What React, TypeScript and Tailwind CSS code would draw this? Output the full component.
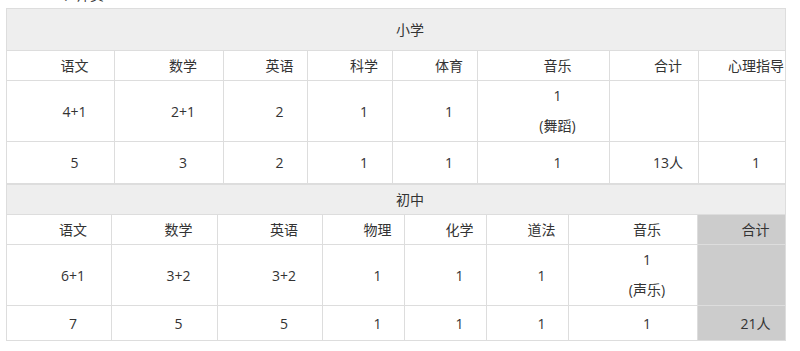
import React from "react";

const font = { fontFamily: '"Open Sans", "Noto Sans CJK SC", sans-serif' };

type Cell = { t?: React.ReactNode; gray?: boolean };

function Row({ cells, h }: { cells: Cell[]; h: string }) {
  return (
    <tr className={h}>
      {cells.map((c, i) => (
        <td
          key={i}
          className={
            "border border-[#dddddd] text-center align-middle pl-[28px] pr-0 py-0 whitespace-nowrap " +
            (c.gray ? "bg-[#cccccc] border-t-[#cccccc] " : "")
          }
        >
          {c.t}
        </td>
      ))}
    </tr>
  );
}

function Two({ a, b }: { a: string; b: string }) {
  return (
    <div className="leading-[30px]">
      <div>{a}</div>
      <div>{b}</div>
    </div>
  );
}

export default function App() {
  const w1 = [108, 109, 84, 85, 85, 132, 89, 87];
  const w2 = [105, 106, 105, 82, 82, 82, 129, 88];
  return (
    <div className="w-[800px] h-[351px] bg-white text-[#333333] text-[14px]" style={font}>
      <div className="h-[8px] overflow-hidden pl-[48px]">
        <div className="-mt-[15px] leading-[20px] text-[#333333]">
          <span className="text-[#c0392b]">一</span>、师资
        </div>
      </div>
      <div className="pl-[6px]">
        <table className="table-fixed border-collapse w-[779px] border border-[#dddddd]">
          <colgroup>
            {w1.map((w, i) => (
              <col key={i} style={{ width: w }} />
            ))}
          </colgroup>
          <tbody>
            <tr className="h-[42px]">
              <td colSpan={8} className="border border-[#dddddd] bg-[#eeeeee] text-center pl-[28px]">
                小学
              </td>
            </tr>
            <Row
              h="h-[30px]"
              cells={["语文", "数学", "英语", "科学", "体育", "音乐", "合计", "心理指导"].map((t) => ({ t }))}
            />
            <Row
              h="h-[60px]"
              cells={[
                { t: "4+1" },
                { t: "2+1" },
                { t: "2" },
                { t: "1" },
                { t: "1" },
                { t: <Two a="1" b="(舞蹈)" /> },
                { t: "" },
                { t: "" },
              ]}
            />
            <Row h="h-[42px]" cells={["5", "3", "2", "1", "1", "1", "13人", "1"].map((t) => ({ t }))} />
          </tbody>
        </table>
        <table className="table-fixed border-collapse w-[779px] border border-[#dddddd]">
          <colgroup>
            {w2.map((w, i) => (
              <col key={i} style={{ width: w }} />
            ))}
          </colgroup>
          <tbody>
            <tr className="h-[30px]">
              <td colSpan={8} className="border border-[#dddddd] bg-[#eeeeee] text-center pl-[28px]">
                初中
              </td>
            </tr>
            <Row
              h="h-[30px]"
              cells={[
                { t: "语文" },
                { t: "数学" },
                { t: "英语" },
                { t: "物理" },
                { t: "化学" },
                { t: "道法" },
                { t: "音乐" },
                { t: "合计", gray: true },
              ]}
            />
            <Row
              h="h-[60px]"
              cells={[
                { t: "6+1" },
                { t: "3+2" },
                { t: "3+2" },
                { t: "1" },
                { t: "1" },
                { t: "1" },
                { t: <Two a="1" b="(声乐)" /> },
                { t: "", gray: true },
              ]}
            />
            <Row
              h="h-[35px]"
              cells={[
                { t: "7" },
                { t: "5" },
                { t: "5" },
                { t: "1" },
                { t: "1" },
                { t: "1" },
                { t: "1" },
                { t: "21人", gray: true },
              ]}
            />
          </tbody>
        </table>
      </div>
    </div>
  );
}
